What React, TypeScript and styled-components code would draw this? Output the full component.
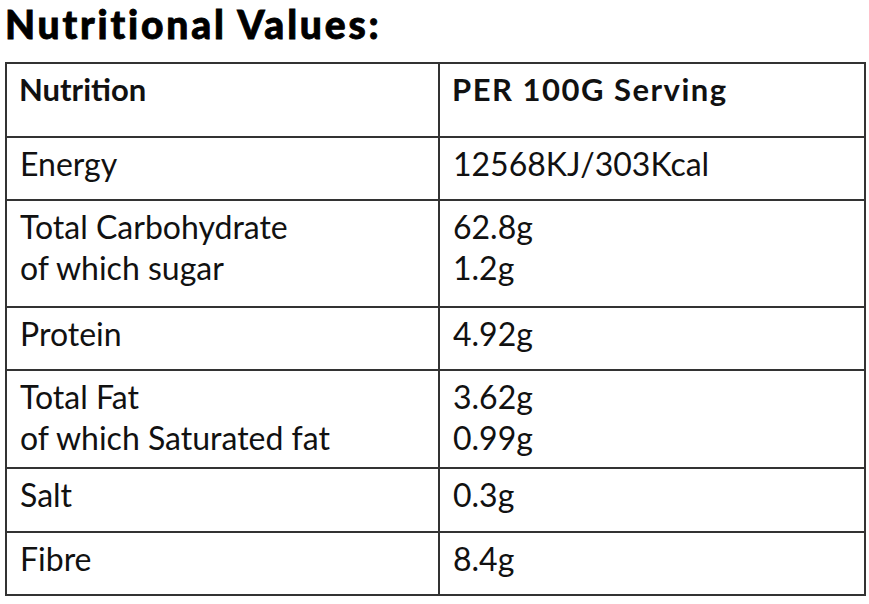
import React from "react";
import styled, { createGlobalStyle } from "styled-components";

interface Row {
  name: string[];
  value: string[];
  height: number;
}

const rows: Row[] = [
  { name: ["Energy"], value: ["12568KJ/303Kcal"], height: 63 },
  { name: ["Total Carbohydrate", "of which sugar"], value: ["62.8g", "1.2g"], height: 107 },
  { name: ["Protein"], value: ["4.92g"], height: 63 },
  { name: ["Total Fat", "of which Saturated fat"], value: ["3.62g", "0.99g"], height: 98 },
  { name: ["Salt"], value: ["0.3g"], height: 64 },
  { name: ["Fibre"], value: ["8.4g"], height: 63 },
];

const App = () => {
  return (
    <>
      <GlobalStyle />
      <Page>
        <Title>Nutritional Values:</Title>
        <Table>
          <colgroup>
            <col style={{ width: 433 }} />
            <col />
          </colgroup>
          <thead>
            <HeadRow>
              <HeadCell>Nutrition</HeadCell>
              <HeadCell>PER 100G Serving</HeadCell>
            </HeadRow>
          </thead>
          <tbody>
            {rows.map((row) => (
              <BodyRow key={row.name[0]} $height={row.height}>
                <Cell>
                  {row.name.map((line) => (
                    <Line key={line}>{line}</Line>
                  ))}
                </Cell>
                <Cell>
                  {row.value.map((line) => (
                    <Line key={line}>{line}</Line>
                  ))}
                </Cell>
              </BodyRow>
            ))}
          </tbody>
        </Table>
      </Page>
    </>
  );
};
export default App;

const GlobalStyle = createGlobalStyle`
  body {
    margin: 0;
    background: #fff;
    font-family: "Lato", "Liberation Sans", sans-serif;
    color: #111;
  }
`;

const Page = styled.div`
  width: 869px;
  height: 604px;
  padding: 0 4px 0 5px;
  box-sizing: border-box;
`;

const Title = styled.h1`
  margin: 0;
  height: 62px;
  font-size: 39px;
  font-weight: 900;
  line-height: 48px;
  letter-spacing: 2.8px;
  color: #000;
  -webkit-text-stroke: 0.8px #000;
`;

const Table = styled.table`
  width: 861px;
  border-collapse: collapse;
  table-layout: fixed;
`;

const HeadRow = styled.tr`
  height: 74px;
`;

const BodyRow = styled.tr<{ $height: number }>`
  height: ${(p) => p.$height}px;
`;

const HeadCell = styled.th`
  border: 2px solid #333;
  padding: 5px 12px 0;
  vertical-align: top;
  text-align: left;
  font-size: 31px;
  font-weight: 700;
  line-height: 41px;
  &:last-child {
    letter-spacing: 1.5px;
  }
`;

const Cell = styled.td`
  border: 2px solid #333;
  padding: 5px 13px 0;
  vertical-align: top;
  font-size: 32px;
  font-weight: 400;
  line-height: 41px;
`;

const Line = styled.div``;
